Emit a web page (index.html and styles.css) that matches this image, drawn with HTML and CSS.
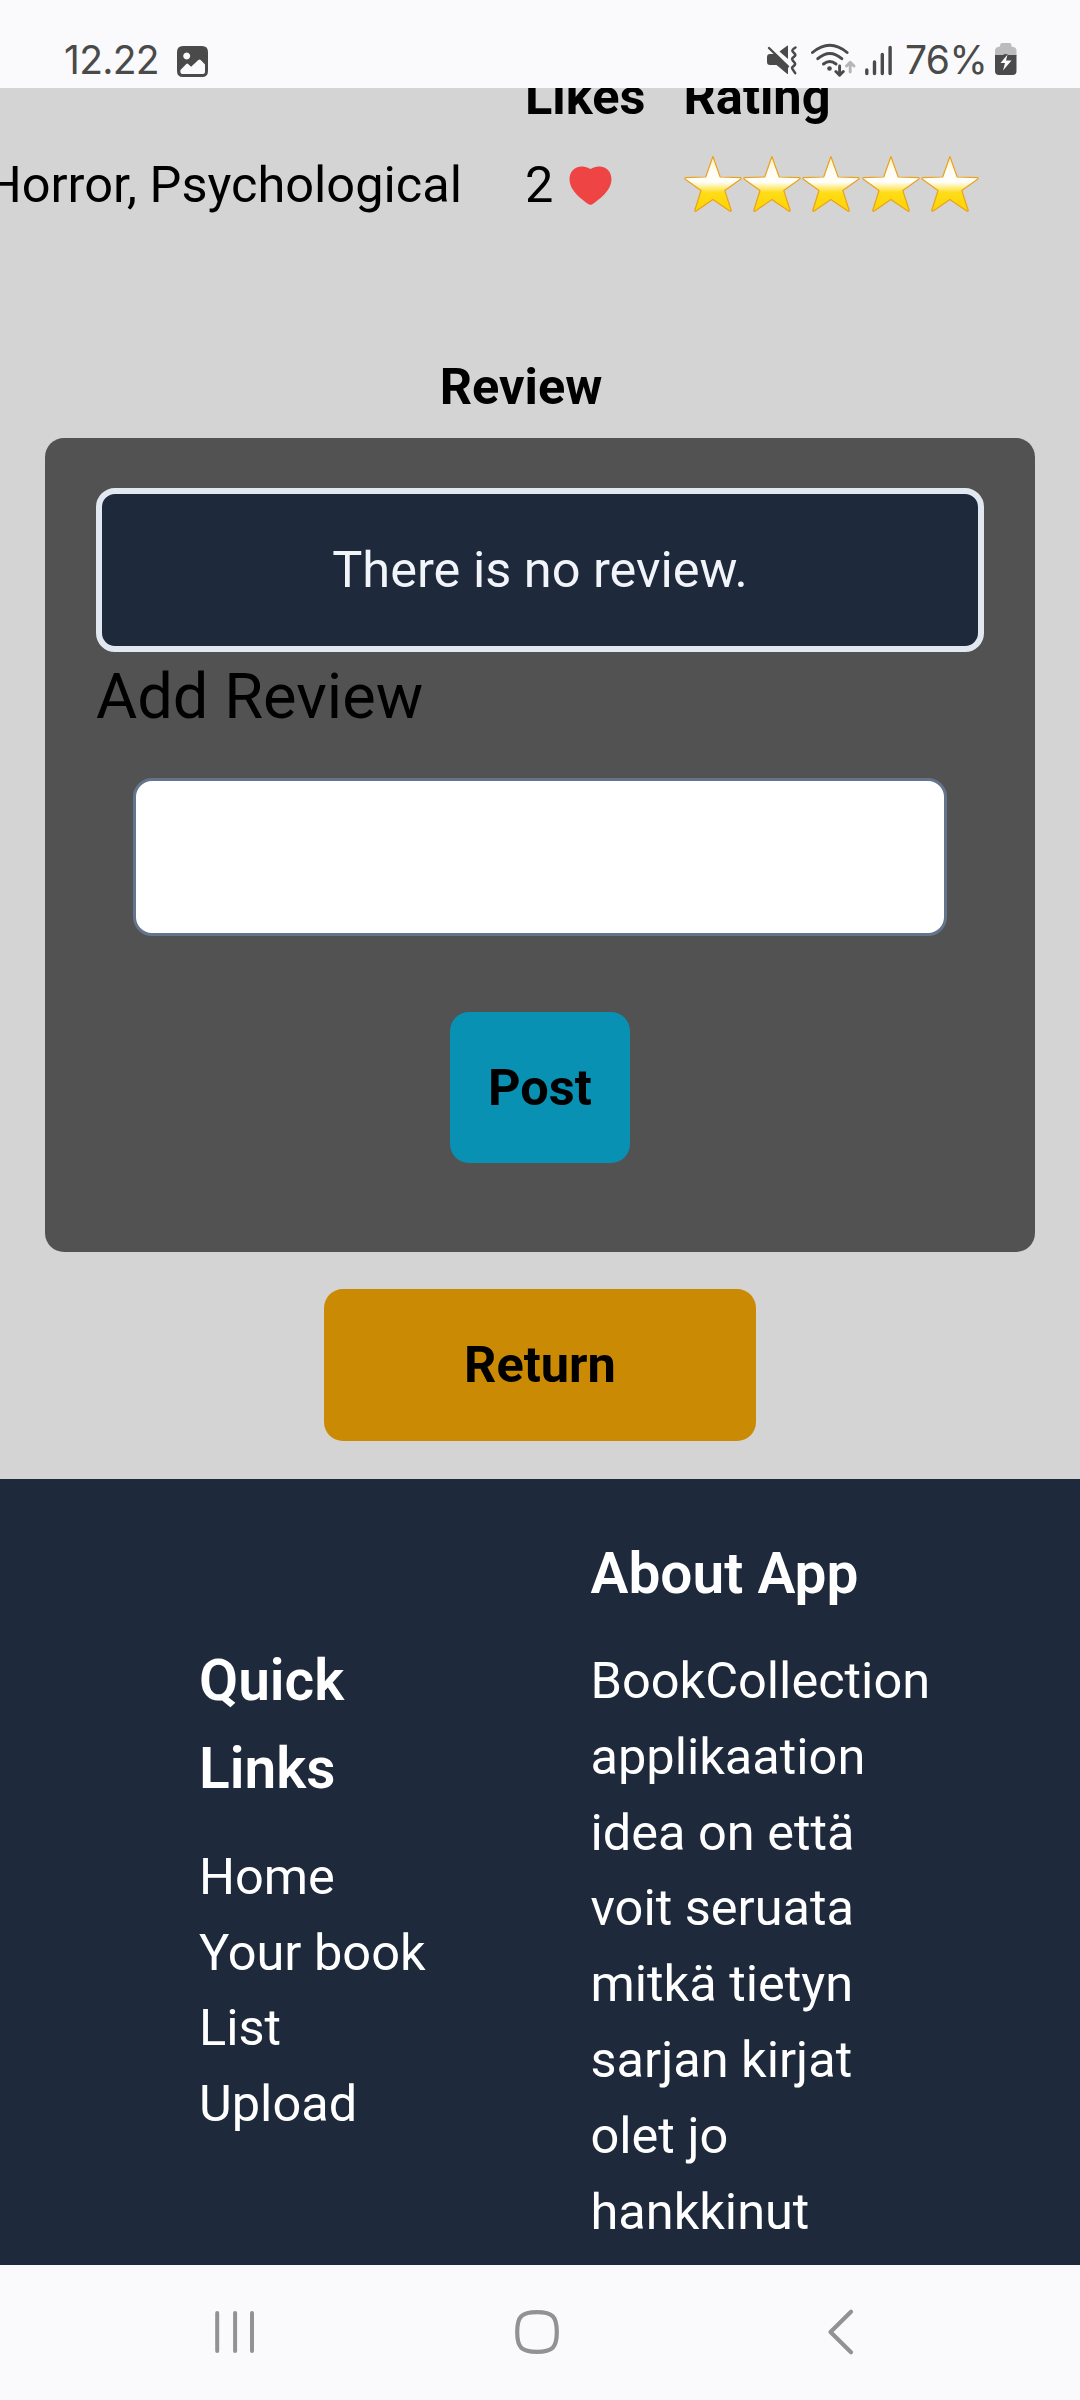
FILE: index.html
```html
<!DOCTYPE html>
<html lang="fi">
<head>
<meta charset="utf-8">
<title>BookCollection</title>
<link rel="stylesheet" href="styles.css">
</head>
<body>
<div class="phone">
  <header class="status">
    <span class="clock">12.22</span>
    <svg class="photo" viewBox="0 0 31 31"><path fill-rule="evenodd" fill="#4a4a4a" d="M6 0h19q6 0 6 6v19q0 6-6 6H6q-6 0-6-6V6q0-6 6-6zM9.700 6.500a3.500 3.500 0 1 0 .01 0zM3.500 24L9.300 18q.9-.9 1.800 0l3 2.800 7.200-6.700q1.200-1.200 2.400 0L28 18.500V26q0 2-2 2H5.500Q2.800 28 3.500 24z"/></svg>
    <div class="indicators">
      <svg width="32" height="34" viewBox="766 44 32 34"><g fill="#4a4a4a"><path d="M770 55h5l13 12.500v7q0 1-1 .3L776.500 66H770q-3 0-3-3v-5q0-3 3-3z"/><path d="M779.500 52.500l7.300-5.600q1.200-.8 1.200.6V60z"/></g><path d="M769 49l19 18.500" stroke="#4a4a4a" stroke-width="2.400" stroke-linecap="round"/><path d="M795.500 48.500q-4 2.500-3 3.800l2.700 3q1 1.200-2.700 3.700-1 1.200 0 2.200l2.500 3q1 1.200-2.500 3.700-1 1.200 0 2.200l2.700 4" fill="none" stroke="#4a4a4a" stroke-width="2.500" stroke-linecap="round"/></svg>
      <svg class="wifi" width="46" height="36" viewBox="810 43 46 36"><g fill="none" stroke="#4a4a4a" stroke-width="2.900" stroke-linecap="round" stroke-linejoin="round"><path d="M812.500 53.500q17.300-14.500 34.600 0M817.800 59.700q12-10.500 24 0M823.500 65q6.300-5 12.500 0M839.600 67v9M835.900 72.500l3.700 3.700 3.700-3.700"/><path stroke="#b5b5b7" d="M850.200 73v-9M846.500 67l3.700-3.700L854 67"/></g><circle cx="829.500" cy="69.500" r="2.300" fill="#4a4a4a"/></svg>
      <svg class="signal" width="29" height="32" viewBox="864 45 29 32"><path d="M866.800 71V74.500M874.500 63v11.500M882.300 55.500V74.500M890.100 48.500V74.500" stroke="#4a4a4a" stroke-width="3.400" stroke-linecap="round"/></svg>
      <span class="percent">76%</span>
      <svg class="battery" width="22" height="34" viewBox="995 44 22 34"><path fill="#bcbcbe" d="M1002 44h8q1.500 0 1.500 3.500 5 .5 5 4V57H995v-5.500q0-3.500 5-4 0-3.500 2-3.500z"/><path fill="#4a4a4a" d="M995 56h8q2.700-2.200 5.400 0h8.100v16q0 4-4 4H999q-4 0-4-4z"/><path fill="#fafafc" d="M1007.500 55.500l-7 8.500h4.500l-2 7.500 8.500-10H1006z"/></svg>
    </div>
  </header>

  <main class="page">
    <div class="books">
      <div class="cell genre"></div><div class="cell head">Likes</div><div class="cell head">Rating</div>
      <div class="cell genre"><span>Horror, Psychological</span></div>
      <div class="cell likes">2 <svg class="heart" viewBox="0 0 43 40"><path fill="#ef4444" d="M21.500 3.200C25 .9 28.500.5 31.500.5 38.500 1 43 6.500 43 13.500 43 25.500 30 34.500 23.300 39.200q-1.800 1.200-3.600 0C13 34.500 0 25.500 0 13.500 0 6.500 4.500 1 11.500.5c3 0 6.500.4 10 2.700z"/></svg></div>
      <div class="cell stars">
        <svg viewBox="0 0 59 58"><defs><linearGradient id="gold" x1="0" y1="0" x2="0" y2="1"><stop offset="0" stop-color="#fff0b8"/><stop offset=".25" stop-color="#fffdf4"/><stop offset=".47" stop-color="#fffef8"/><stop offset=".66" stop-color="#ffdc18"/><stop offset="1" stop-color="#ffd400"/></linearGradient><symbol id="star" viewBox="0 0 59 58"><path fill="url(#gold)" stroke="#e9a21c" stroke-width="1.200" stroke-linejoin="round" d="M28.700 1.500L36 22l20.500.6q.8 1-.2 1.700L40.600 35.500l6.500 20.200q-.6 1-1.500.4L28.700 44.500 12 56.100q-1 .6-1.500-.4L16.800 35.500 1.200 24.300q-1-.7-.2-1.700L21.500 22z"/></symbol></defs><use href="#star"/></svg><svg viewBox="0 0 59 58"><use href="#star"/></svg><svg viewBox="0 0 59 58"><use href="#star"/></svg><svg viewBox="0 0 59 58"><use href="#star"/></svg><svg viewBox="0 0 59 58"><use href="#star"/></svg>
      </div>
    </div>

    <h2 class="review-title">Review</h2>
    <section class="card">
      <p class="empty">There is no review.</p>
      <h3 class="add">Add Review</h3>
      <input class="field" type="text" aria-label="Add Review">
      <button class="btn post">Post</button>
    </section>
    <button class="btn return">Return</button>

    <footer class="footer">
      <div class="col links">
        <h4>Quick<br>Links</h4>
        <ul><li>Home</li><li>Your book<br>List</li><li>Upload</li></ul>
      </div>
      <div class="col about">
        <h4>About App</h4>
        <p>BookCollection<br>applikaation<br>idea on että<br>voit seruata<br>mitkä tietyn<br>sarjan kirjat<br>olet jo<br>hankkinut</p>
      </div>
    </footer>
  </main>

  <nav class="nav">
    <svg width="42" height="48" viewBox="0 0 42 48"><path d="M5.200 5v38M23.100 5v38M40 5v38" stroke="#929292" stroke-width="4" stroke-linecap="round"/></svg>
    <svg class="home" width="46" height="48" viewBox="0 0 46 48"><path d="M23 4.200C38.500 4.200 42.800 8.500 42.800 24S38.500 43.800 23 43.800 3.200 39.500 3.200 24 7.500 4.200 23 4.200z" fill="none" stroke="#929292" stroke-width="4.200"/></svg>
    <svg width="28" height="48" viewBox="0 0 28 48"><path d="M25 3.800L4.500 24 25 44.200" fill="none" stroke="#929292" stroke-width="4.200" stroke-linecap="round" stroke-linejoin="round"/></svg>
  </nav>
</div>
</body>
</html>
```
FILE: styles.css
```css
* { box-sizing: border-box; margin: 0; padding: 0; }
body { font-family: Roboto, sans-serif; font-size: 50.5px; line-height: 75.8px; color: #000; }
svg { display: block; flex: none; }
.phone { width: 1080px; height: 2400px; display: flex; flex-direction: column; overflow: hidden; }

.status { height: 88px; flex: none; display: flex; align-items: center; padding: 32px 63px 0 64px; background: #fafafc; color: #4a4a4a; font-family: Inter, sans-serif; font-size: 39px; line-height: 48px; font-weight: 400; }
.clock { width: 113px; letter-spacing: -0.7px; }
.photo { width: 31px; height: 31px; margin-top: 2px; }
.indicators { display: flex; align-items: center; margin-left: auto; }
.wifi { margin-left: 12px; }
.signal { margin-left: 8px; }
.percent { width: 82px; margin-left: 12px; letter-spacing: -0.6px; white-space: nowrap; }
.battery { margin-left: 8px; }

.page { height: 2177px; flex: none; background: #d4d4d4; overflow: hidden; display: flex; flex-direction: column; align-items: center; }
.books { width: 1080px; flex: none; display: grid; grid-template-columns: 462px 95.5px 1fr; column-gap: 63px; grid-template-rows: 75.8px 75.8px; row-gap: 12.2px; margin-top: -29px; }
.cell { display: flex; align-items: center; white-space: nowrap; }
.genre { justify-content: flex-end; }
.head { font-weight: 700; }
.heart { width: 43px; height: 39px; margin: 2px 0 0 16px; }
.stars { padding-bottom: 2px; }
.stars svg { width: 59.4px; height: 58px; }
.review-title { width: 1080px; padding-right: 38px; margin-top: 126px; text-align: center; font-size: 50.5px; font-weight: 700; }

.card { width: 990px; height: 814px; flex: none; margin-top: 13.4px; padding: 50px 51px; border-radius: 19px; background: #525252; display: flex; flex-direction: column; align-items: center; }
.empty { width: 888px; height: 164px; border: 6px solid #e2e8f0; border-radius: 19px; background: #1e293b; color: #f1f5f9; text-align: center; line-height: 152px; }
.add { align-self: flex-start; font-size: 63.2px; line-height: 88px; font-weight: 400; }
.field { width: 814px; height: 158px; margin-top: 38px; border: 3px solid #64748b; border-radius: 19px; background: #fff; }
.btn { border: 0; border-radius: 19px; color: #000; font: 700 50.5px/75.8px Roboto, sans-serif; height: 152px; flex: none; }
.post { width: 180px; height: 151px; margin-top: 76px; background: #0891b2; }
.return { width: 432px; margin-top: 37px; background: #ca8a04; }

.footer { width: 1080px; height: 821px; flex: none; margin-top: 38px; padding: 50px 0 50px 199px; background: #1e293b; color: #fff; display: flex; align-items: center; }
.col h4 { font-size: 56.8px; line-height: 88.4px; font-weight: 600; margin-bottom: 25px; }
.col ul { list-style: none; }
.links { width: 391.5px; }

.nav { height: 135px; flex: none; display: flex; align-items: center; justify-content: space-between; padding: 0 226px 2px 212px; background: #fafafc; }
.home { margin-right: 7px; }
```
